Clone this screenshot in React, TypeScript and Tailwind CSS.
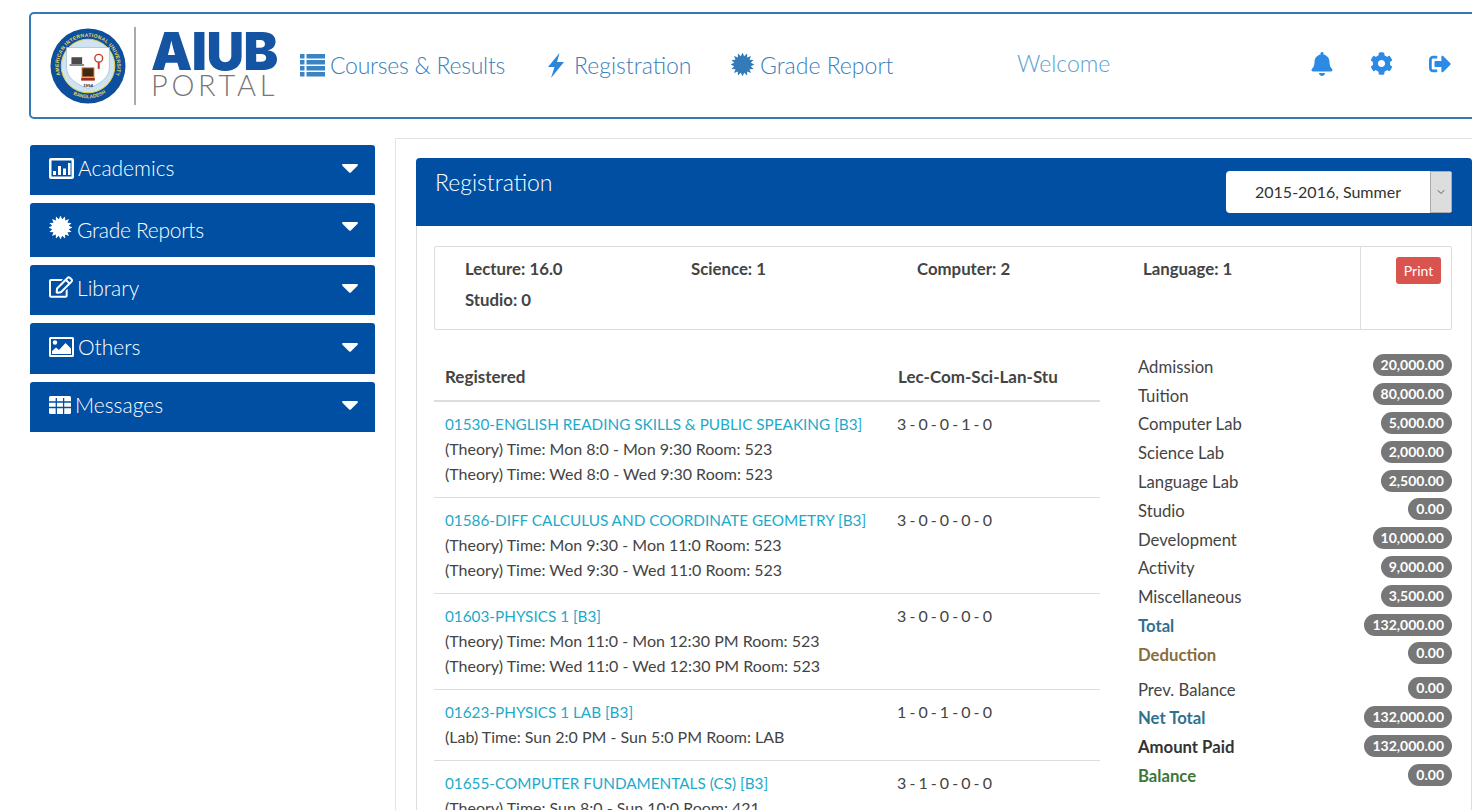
import React from 'react';
import { ChevronDown } from 'lucide-react';
import { FaBell, FaCog, FaSignOutAlt, FaRegEdit } from 'react-icons/fa';

// spiky seal used by the grade links
function Burst({ size, className }: { size: number; className?: string }) {
  const points: string[] = [];
  for (let i = 0; i < 32; i++) {
    const r = i % 2 === 0 ? 12.5 : 8.8;
    const a = (i * Math.PI) / 16;
    points.push(`${(12 + r * Math.sin(a)).toFixed(2)},${(12 - r * Math.cos(a)).toFixed(2)}`);
  }
  return (
    <svg width={size} height={size} viewBox="0 0 24 24" fill="currentColor" className={className}>
      <polygon points={points.join(' ')} />
    </svg>
  );
}

function ListIcon() {
  return (
    <svg width="25" height="23" viewBox="0 0 25 23" fill="#3a84c4">
      {[0, 6, 12, 18].map((y) => (
        <g key={y}>
          <rect x="0" y={y} width="4.5" height="4.5" />
          <rect x="6.5" y={y} width="18.5" height="4.5" />
        </g>
      ))}
    </svg>
  );
}

function BoltIcon() {
  return (
    <svg width="18" height="25" viewBox="0 0 18 25" fill="#2a86d8">
      <path d="M12.5 0 1 14h6.5L4 25 17 9h-7z" />
    </svg>
  );
}

function ChartBoxIcon() {
  return (
    <svg width="25" height="21" viewBox="0 0 25 21" fill="white">
      <path fillRule="evenodd" d="M2 0h21a2 2 0 0 1 2 2v17a2 2 0 0 1-2 2H2a2 2 0 0 1-2-2V2a2 2 0 0 1 2-2zm.5 2.5v16h20v-16z" />
      <rect x="4" y="13" width="3" height="4" />
      <rect x="9" y="8" width="3" height="9" />
      <rect x="14" y="10.5" width="3" height="6.5" />
      <rect x="19" y="5" width="2.5" height="12" />
    </svg>
  );
}

function PictureIcon() {
  return (
    <svg width="25" height="20" viewBox="0 0 25 20" fill="white">
      <path fillRule="evenodd" d="M1.500 0h22A1.500 1.500 0 0 1 25 1.500v17a1.500 1.500 0 0 1-1.500 1.500h-22A1.500 1.500 0 0 1 0 18.500v-17A1.500 1.500 0 0 1 1.500 0zM2 2v16h21V2z" />
      <circle cx="6" cy="5.500" r="2.200" />
      <path d="M3 17v-3l4-3.500 3 2.500 6.500-7L22 11.500V17z" />
    </svg>
  );
}

function GridIcon() {
  return (
    <svg width="22" height="18" viewBox="0 0 22 18">
      <rect width="22" height="18" rx="1.500" fill="white" />
      <path d="M0 6h22M0 11.500h22M7.300 2v16M14.600 2v16" stroke="#004fa3" strokeWidth="1.300" />
    </svg>
  );
}

const SIDE_ITEMS = [
  { label: 'Academics', icon: <ChartBoxIcon />, box: 'h-[50px] mb-2 pt-[9px]', caret: 'pt-[10px]', gap: 'gap-[4px]', text: '' },
  { label: 'Grade Reports', icon: <Burst size={23} className="mb-[5px]" />, box: 'h-[54px] mb-2 pt-[13px]', caret: 'pt-[6px]', gap: 'gap-[5px]', text: 'tracking-[-0.3px]' },
  { label: 'Library', icon: <FaRegEdit size={24} className="mb-[3px]" />, box: 'h-[50px] mb-2 pt-[9px]', caret: 'pt-[10px]', gap: 'gap-[4px]', text: '' },
  { label: 'Others', icon: <PictureIcon />, box: 'h-[51px] mb-2 pt-[10px]', caret: 'pt-[10px]', gap: 'gap-[4px]', text: '' },
  { label: 'Messages', icon: <GridIcon />, box: 'h-[50px] pt-[9px]', caret: 'pt-[10px]', gap: 'gap-[4px]', text: '' },
];

const COUNTS = ['Lecture: 16.0', 'Science: 1', 'Computer: 2', 'Language: 1', 'Studio: 0'];

const COURSES = [
  {
    title: '01530-ENGLISH READING SKILLS & PUBLIC SPEAKING [B3]',
    lines: ['(Theory) Time: Mon 8:0 - Mon 9:30 Room: 523', '(Theory) Time: Wed 8:0 - Wed 9:30 Room: 523'],
    credit: '3 - 0 - 0 - 1 - 0',
  },
  {
    title: '01586-DIFF CALCULUS AND COORDINATE GEOMETRY [B3]',
    lines: ['(Theory) Time: Mon 9:30 - Mon 11:0 Room: 523', '(Theory) Time: Wed 9:30 - Wed 11:0 Room: 523'],
    credit: '3 - 0 - 0 - 0 - 0',
  },
  {
    title: '01603-PHYSICS 1 [B3]',
    lines: ['(Theory) Time: Mon 11:0 - Mon 12:30 PM Room: 523', '(Theory) Time: Wed 11:0 - Wed 12:30 PM Room: 523'],
    credit: '3 - 0 - 0 - 0 - 0',
  },
  {
    title: '01623-PHYSICS 1 LAB [B3]',
    lines: ['(Lab) Time: Sun 2:0 PM - Sun 5:0 PM Room: LAB'],
    credit: '1 - 0 - 1 - 0 - 0',
  },
  {
    title: '01655-COMPUTER FUNDAMENTALS (CS) [B3]',
    lines: ['(Theory) Time: Sun 8:0 - Sun 10:0 Room: 421'],
    credit: '3 - 1 - 0 - 0 - 0',
  },
];

const FEES = [
  { label: 'Admission', value: '20,000.00', cls: 'text-[#444]' },
  { label: 'Tuition', value: '80,000.00', cls: 'text-[#444]' },
  { label: 'Computer Lab', value: '5,000.00', cls: 'text-[#444]' },
  { label: 'Science Lab', value: '2,000.00', cls: 'text-[#444]' },
  { label: 'Language Lab', value: '2,500.00', cls: 'text-[#444]' },
  { label: 'Studio', value: '0.00', cls: 'text-[#444]' },
  { label: 'Development', value: '10,000.00', cls: 'text-[#444]' },
  { label: 'Activity', value: '9,000.00', cls: 'text-[#444]' },
  { label: 'Miscellaneous', value: '3,500.00', cls: 'text-[#444]' },
  { label: 'Total', value: '132,000.00', cls: 'text-[#31708f] font-bold' },
  { label: 'Deduction', value: '0.00', cls: 'text-[#8a6d3b] font-bold mb-[6px]' },
  { label: 'Prev. Balance', value: '0.00', cls: 'text-[#444]' },
  { label: 'Net Total', value: '132,000.00', cls: 'text-[#31708f] font-bold' },
  { label: 'Amount Paid', value: '132,000.00', cls: 'text-[#333] font-bold' },
  { label: 'Balance', value: '0.00', cls: 'text-[#3c763d] font-bold' },
];

function Emblem() {
  return (
    <svg width="76" height="76" viewBox="0 0 78 78">
      <defs>
        <path id="top-arc" d="M13 54A30 30 0 1 1 65 54" />
        <path id="bottom-arc" d="M17 63.600A33 33 0 0 0 61 63.600" />
      </defs>
      <circle cx="39" cy="39" r="38.500" fill="#0d4f9c" />
      <circle cx="39" cy="39" r="27.500" fill="#cfe3f1" stroke="#e6d34a" strokeWidth="1" />
      <text fontSize="5.200" fontWeight="700" fill="#e8dc5a" fontFamily="Liberation Sans, sans-serif" letterSpacing="0.3">
        <textPath href="#top-arc" startOffset="6">AMERICAN INTERNATIONAL UNIVERSITY</textPath>
      </text>
      <text fontSize="5" fontWeight="700" fill="#e8dc5a" fontFamily="Liberation Sans, sans-serif">
        <textPath href="#bottom-arc" startOffset="8">BANGLADESH</textPath>
      </text>
      <path d="M17 20h44v20c0 12-11 18-22 22-11-4-22-10-22-22z" fill="#fff" stroke="#9fc0dc" strokeWidth="0.800" />
      <rect x="22" y="30" width="11" height="7" fill="#4a4a4a" />
      <rect x="20" y="37" width="15" height="2" fill="#888" />
      <circle cx="50" cy="31" r="4" fill="#fff" stroke="#c0392b" strokeWidth="1.400" />
      <rect x="49" y="35" width="2" height="7" fill="#c0392b" />
      <rect x="33" y="41" width="12" height="9" fill="#3d2a1c" stroke="#b5651d" strokeWidth="1" />
      <rect x="32" y="51" width="14" height="3" fill="#a02c20" />
      <text x="39" y="60.500" textAnchor="middle" fontSize="4.500" fontWeight="700" fill="#222" fontFamily="Liberation Sans, sans-serif">1994</text>
    </svg>
  );
}

function Caret() {
  return (
    <svg width="16" height="9" viewBox="0 0 16 9" fill="white">
      <path d="M1.200 0h13.600c1 0 1.400 1 .8 1.700L8.800 8.400c-.4.500-1.200.500-1.600 0L.4 1.700C-.2 1 .2 0 1.200 0z" />
    </svg>
  );
}

function Header() {
  return (
    <header className="ml-[29px] mt-3 flex h-[107px] w-[1460px] items-center rounded-[5px] border-2 border-[#337ab7] bg-white">
      <div className="ml-[19px] flex w-[250px] shrink-0 items-center">
        <Emblem />
        <div className="ml-[8px] h-[78px] w-[2px] bg-[#aaa]" />
        <div className="ml-[15px] flex flex-col">
          <span className="font-['Inter'] text-[52px] leading-[38px] font-black tracking-[-0.5px] text-[#1553a3]">AIUB</span>
          <span className="font-['Lato'] text-[29px] leading-[27px] font-light tracking-[3.700px] text-[#777]">PORTAL</span>
        </div>
      </div>
      <nav className="flex items-center font-['Lato'] text-[23px] font-light text-[#3a80ba]">
        <div className="flex w-[247px] items-center gap-[5px]">
          <ListIcon />
          <span className="tracking-[-0.25px]">Courses &amp; Results</span>
        </div>
        <div className="flex w-[184px] items-center gap-[9px]">
          <BoltIcon />
          <span>Registration</span>
        </div>
        <div className="flex w-[286px] items-center gap-[6px]">
          <Burst size={23} className="mb-[3px] text-[#337ab7]" />
          <span>Grade Report</span>
        </div>
      </nav>
      <div className="w-[293px] pb-1 font-['Lato'] text-[23px] font-light text-[#5a9fd0]">Welcome</div>
      <div className="flex items-center pb-1 text-[#2a8ae6]">
        <div className="w-[60px]"><FaBell size={24} /></div>
        <div className="w-[59px]"><FaCog size={23} /></div>
        <div><FaSignOutAlt size={22} /></div>
      </div>
    </header>
  );
}

function Sidebar() {
  return (
    <aside className="ml-[30px] w-[345px] shrink-0 pt-[7px]">
      {SIDE_ITEMS.map((item) => (
        <div
          key={item.label}
          className={`${item.box} flex items-start justify-between rounded-t-[3px] bg-[#004fa3] pr-[17px] pl-[19px] text-white`}
        >
          <div className={`flex items-center ${item.gap} font-['Lato'] text-[21px] leading-[28px] font-light`}>
            {item.icon}
            <span className={item.text}>{item.label}</span>
          </div>
          <div className={item.caret}><Caret /></div>
        </div>
      ))}
    </aside>
  );
}

function SummaryBox() {
  return (
    <div className="flex h-[84px] rounded-[2px] border border-[#ddd]">
      <div className="grid w-[925px] shrink-0 grid-cols-[226px_226px_226px_217px] content-start gap-y-[6px] pt-[9px] pl-[30px] text-[16.800px] leading-[25px] font-bold text-[#444]">
        {COUNTS.map((item) => (
          <div key={item}>{item}</div>
        ))}
      </div>
      <div className="flex flex-1 justify-end border-l border-[#ddd] pt-[10px] pr-[10px]">
        <button className="h-[27px] w-[45px] rounded-[3px] bg-[#d9534f] text-[14px] text-white">Print</button>
      </div>
    </div>
  );
}

function CourseTable() {
  return (
    <div className="w-[666px] shrink-0 text-[16px] leading-[25px]">
      <div className="flex h-[49px] items-center border-b-2 border-[#ddd] text-[17px] font-bold">
        <div className="w-[464px] pl-[11px] text-[#444]">Registered</div>
        <div className="text-[#444]">Lec-Com-Sci-Lan-Stu</div>
      </div>
      {COURSES.map((course) => (
        <div key={course.title} className="flex border-b border-[#ddd] pt-[9px] pb-[11px] last:border-b-0">
          <div className="w-[463px] shrink-0 pl-[11px]">
            <a className="block h-[25px] text-[15.300px] leading-[27px] whitespace-nowrap text-[#1caacb]">{course.title}</a>
            {course.lines.map((line) => (
              <div key={line} className="whitespace-nowrap text-[#444]">{line}</div>
            ))}
          </div>
          <div className="text-[#444] [word-spacing:-1px]">{course.credit}</div>
        </div>
      ))}
    </div>
  );
}

function FeeList() {
  return (
    <div className="ml-[38px] flex-1 text-[16.700px]">
      {FEES.map((fee) => (
        <div key={fee.label} className={`flex h-[28.800px] items-center justify-between ${fee.cls}`}>
          <span>{fee.label}</span>
          <span className="mb-[4px] rounded-[11px] bg-[#777] px-[8px] text-[14px] leading-[22px] font-bold text-white">{fee.value}</span>
        </div>
      ))}
    </div>
  );
}

export default function App() {
  return (
    <div className="h-[810px] w-[1472px] overflow-hidden bg-white font-['Lato',sans-serif]">
      <Header />
      <div className="flex pt-[19px]">
        <Sidebar />
        <main className="ml-[20px] w-[1100px] shrink-0 border-t border-l border-[#e3e3e3] pt-[19px] pl-[20px]">
          <section className="w-[1056px] rounded-t-[4px] border-x border-[#ddd]">
            <div className="-mx-px flex h-[68px] justify-between rounded-t-[4px] bg-[#004fa3] pt-[13px] pr-[20px] pl-[19px] text-white">
              <h2 className="-mt-px font-['Lato'] text-[23px] leading-[24px] font-light">Registration</h2>
              <div className="flex h-[42px] w-[226px] overflow-hidden rounded-[4px] bg-white text-[#333]">
                <div className="flex flex-1 items-center justify-center text-[16px]">2015-2016, Summer</div>
                <div className="flex w-[22px] items-center justify-center border border-[#aaa] bg-[#ddd]">
                  <ChevronDown size={12} strokeWidth={1.500} />
                </div>
              </div>
            </div>
            <div className="pt-[20px] pr-[19px] pl-[17px]">
              <SummaryBox />
              <div className="mt-[23px] flex">
                <CourseTable />
                <FeeList />
              </div>
            </div>
          </section>
        </main>
      </div>
    </div>
  );
}
